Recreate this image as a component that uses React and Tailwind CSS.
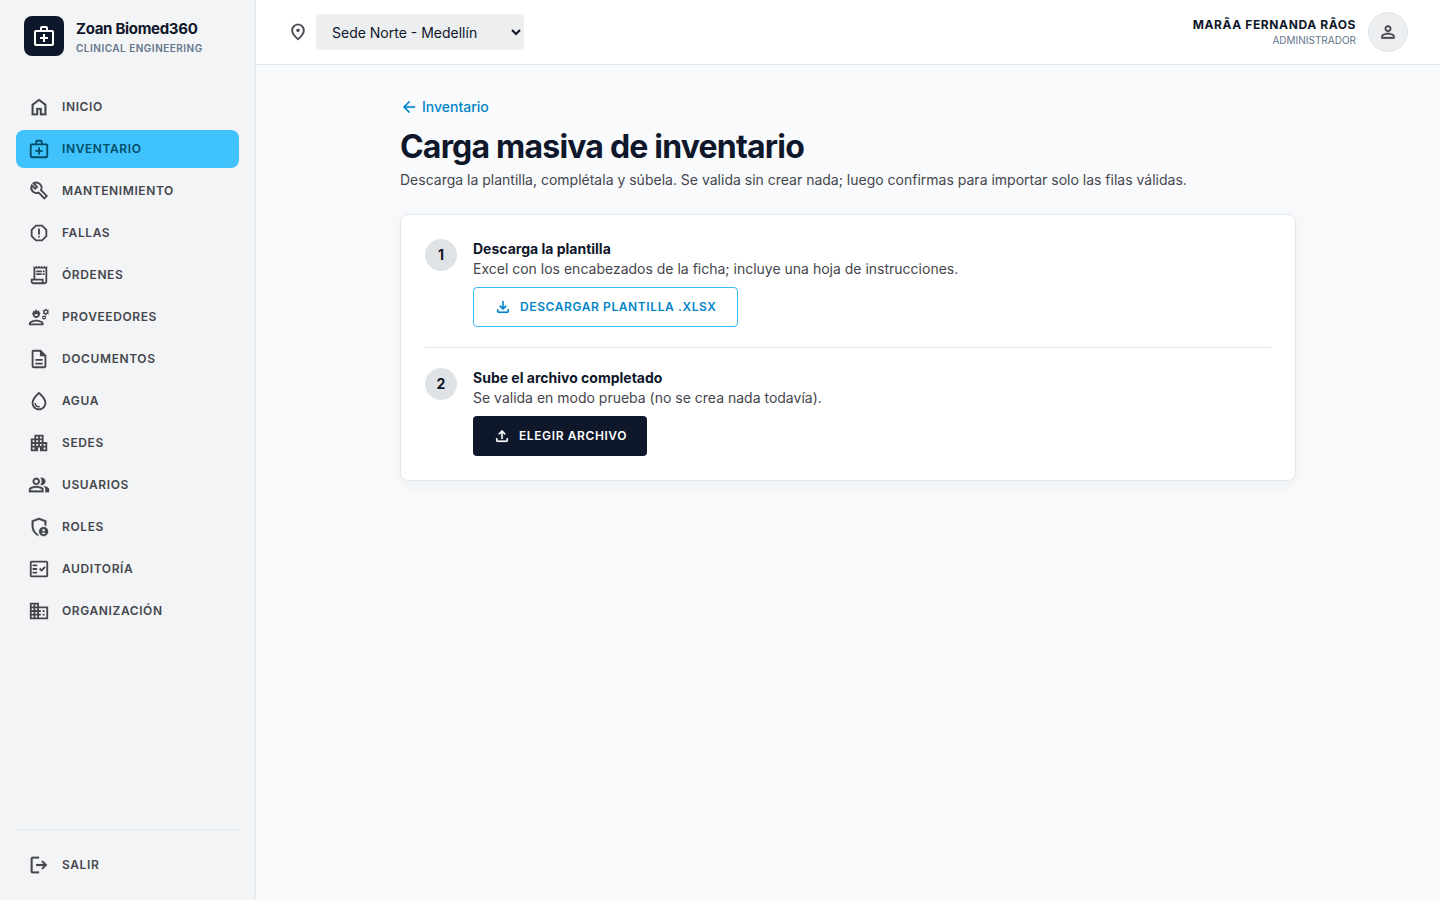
import React, { useState } from 'react';
import {
    MdOutlineMedicalServices,
    MdOutlineReport,
    MdOutlineReceiptLong,
    MdOutlineEngineering,
    MdOutlineDescription,
    MdOutlineWaterDrop,
    MdApartment,
    MdOutlineFactCheck,
    MdDomain,
} from 'react-icons/md';

const Icon = ({ d, size = 22 }) => (
    <svg
        width={size}
        height={size}
        viewBox="0 0 24 24"
        fill="currentColor"
        stroke="currentColor"
        strokeWidth="0.25"
        className="shrink-0"
        aria-hidden="true"
    >
        <path d={d} />
    </svg>
);

const WrenchIcon = () => (
    <svg width="22" height="22" viewBox="0 0 24 24" fill="none" stroke="currentColor" strokeWidth="2" className="shrink-0" aria-hidden="true">
        <path d="M4.2 5.8L7.8 9.4L9.8 7.4L6 3.7A5.8 5.8 0 0 1 14.2 11.2L20.4 17.4L17.8 20L11.6 13.8A5.8 5.8 0 0 1 4.2 5.8z" />
    </svg>
);

const paths = {
    home: 'M6 19h3v-6h6v6h3v-9l-6-4.5L6 10zm-2 2V9l8-6 8 6v12h-7v-6h-2v6z',
    roles: 'M12 22q-3.475-.875-5.738-3.988T4 11.1V5l8-3l8 3v5.7q-.475-.2-.975-.363T18 10.1V6.4l-6-2.25L6 6.4v4.7q0 1.175.313 2.35t.875 2.238T8.55 17.65t1.775 1.5q.275.8.725 1.525t1.025 1.3q-.025 0-.037.012T12 22m5 0q-2.075 0-3.537-1.463T12 17t1.463-3.537T17 12t3.538 1.463T22 17t-1.463 3.538T17 22m0-5q.625 0 1.063-.437T18.5 15.5t-.437-1.062T17 14t-1.062.438T15.5 15.5t.438 1.063T17 17m0 3q.775 0 1.425-.363t1.05-.962q-.55-.325-1.175-.5T17 18t-1.3.175t-1.175.5q.4.6 1.05.963T17 20',
    group: 'M1 20v-2.8q0-.85.438-1.562T2.6 14.55q1.55-.775 3.15-1.162T9 13t3.25.388t3.15 1.162q.725.375 1.163 1.088T17 17.2V20zm18 0v-3q0-1.1-.612-2.113T16.65 13.15q1.275.15 2.4.513t2.1.887q.9.5 1.375 1.112T23 17v3zM9 12q-1.65 0-2.825-1.175T5 8t1.175-2.825T9 4t2.825 1.175T13 8t-1.175 2.825T9 12m10-4q0 1.65-1.175 2.825T15 12q-.275 0-.7-.062t-.7-.138q.675-.8 1.038-1.775T15 8t-.362-2.025T13.6 4.2q.35-.125.7-.163T15 4q1.65 0 2.825 1.175T19 8M3 18h12v-.8q0-.275-.137-.5t-.363-.35q-1.35-.675-2.725-1.012T9 15t-2.775.338T3.5 16.35q-.225.125-.362.35T3 17.2zm6-8q.825 0 1.413-.587T11 8t-.587-1.412T9 6t-1.412.588T7 8t.588 1.413T9 10',
    logout: 'M5 21q-.825 0-1.412-.587T3 19V5q0-.825.588-1.412T5 3h7v2H5v14h7v2zm11-4l-1.375-1.45l2.55-2.55H9v-2h8.175l-2.55-2.55L16 7l5 5z',
    pin: 'M12 12q.825 0 1.413-.588T14 10t-.587-1.413T12 8t-1.413.588T10 10t.588 1.413T12 12m0 7.35q3.05-2.8 4.525-5.088T18 10.2q0-2.725-1.737-4.462T12 4T7.738 5.738T6 10.2q0 1.775 1.475 4.063T12 19.35M12 22q-4.025-3.425-6.012-6.362T4 10.2q0-3.75 2.413-5.975T12 2t5.588 2.225T20 10.2q0 2.5-1.987 5.438T12 22',
    person: 'M12 12q-1.65 0-2.825-1.175T8 8t1.175-2.825T12 4t2.825 1.175T16 8t-1.175 2.825T12 12m-8 8v-2.8q0-.85.438-1.562T5.6 14.55q1.55-.775 3.15-1.162T12 13t3.25.388t3.15 1.162q.725.375 1.163 1.088T20 17.2V20zm2-2h12v-.8q0-.275-.137-.5t-.363-.35q-1.35-.675-2.725-1.012T12 15t-2.775.338T6.5 16.35q-.225.125-.363.35T6 17.2zm6-8q.825 0 1.413-.587T14 8t-.587-1.412T12 6t-1.412.588T10 8t.588 1.413T12 10',
    back: 'm7.825 13l5.6 5.6L12 20l-8-8l8-8l1.425 1.4l-5.6 5.6H20v2z',
    download: 'm12 16l-5-5l1.4-1.45l2.6 2.6V4h2v8.15l2.6-2.6L17 11zm-6 4q-.825 0-1.412-.587T4 18v-3h2v3h12v-3h2v3q0 .825-.587 1.413T18 20z',
    upload: 'M11 16V7.85l-2.6 2.6L7 9l5-5l5 5l-1.4 1.45l-2.6-2.6V16zm-5 4q-.825 0-1.412-.587T4 18v-3h2v3h12v-3h2v3q0 .825-.587 1.413T18 20z',
};

const navItems = [
    { label: 'Inicio', icon: <Icon d={paths.home} /> },
    { label: 'Inventario', icon: <MdOutlineMedicalServices size={22} />, active: true },
    { label: 'Mantenimiento', icon: <WrenchIcon /> },
    { label: 'Fallas', icon: <MdOutlineReport size={22} /> },
    { label: 'Órdenes', icon: <MdOutlineReceiptLong size={22} /> },
    { label: 'Proveedores', icon: <MdOutlineEngineering size={22} /> },
    { label: 'Documentos', icon: <MdOutlineDescription size={22} /> },
    { label: 'Agua', icon: <MdOutlineWaterDrop size={22} /> },
    { label: 'Sedes', icon: <MdApartment size={22} /> },
    { label: 'Usuarios', icon: <Icon d={paths.group} /> },
    { label: 'Roles', icon: <Icon d={paths.roles} /> },
    { label: 'Auditoría', icon: <MdOutlineFactCheck size={22} /> },
    { label: 'Organización', icon: <MdDomain size={22} /> },
];

const Sidebar = () => (
    <aside className="w-64 shrink-0 flex flex-col bg-[#f2f4f6] border-r border-[#e2e8f0]">
        <div className="flex items-center gap-3 px-6 pt-4 pb-8">
            <div className="w-10 h-10 rounded-lg bg-[#0f172a] text-white flex items-center justify-center">
                <MdOutlineMedicalServices size={24} />
            </div>
            <div>
                <p className="text-[15px] leading-6 font-bold tracking-[-0.02em] text-[#0f172a]">Zoan Biomed360</p>
                <p className="text-[10px] leading-[14px] font-semibold uppercase tracking-wider text-[#64748b]">Clinical Engineering</p>
            </div>
        </div>

        <nav className="flex-1 px-4 flex flex-col gap-1">
            {navItems.map((item) => (
                <a
                    key={item.label}
                    href="#"
                    className={`flex items-center gap-3 px-3 py-2 rounded-lg text-xs font-semibold uppercase tracking-wider ${
                        item.active ? 'bg-[#40c2fd] text-[#004d6a]' : 'text-[#45464d] hover:bg-[#e6e8ea]'
                    }`}
                >
                    {item.icon}
                    {item.label}
                </a>
            ))}
        </nav>

        <div className="mx-4 py-4 border-t border-[#e2e8f0]">
            <button
                type="button"
                className="w-full flex items-center gap-3 px-3 py-2 rounded-lg text-xs font-semibold uppercase tracking-wider text-[#45464d] hover:bg-[#e6e8ea]"
            >
                <Icon d={paths.logout} />
                Salir
            </button>
        </div>
    </aside>
);

const Topbar = () => {
    const [sede, setSede] = useState('norte');

    return (
        <header className="h-[65px] shrink-0 flex items-center justify-between px-8 bg-white border-b border-[#e2e8f0]">
            <div className="flex items-center gap-2 text-[#45464d]">
                <Icon d={paths.pin} size={20} />
                <select
                    aria-label="Sede"
                    value={sede}
                    onChange={(e) => setSede(e.target.value)}
                    className="w-52 h-9 px-3 rounded bg-[#eceef0] text-sm text-[#0f172a]"
                >
                    <option value="norte">Sede Norte - Medellín</option>
                </select>
            </div>

            <div className="flex items-center gap-3">
                <div className="text-right">
                    <p className="text-xs leading-4 font-bold uppercase tracking-wider text-[#0f172a]">MarÃ­a Fernanda RÃ­os</p>
                    <p className="text-[10px] leading-[14px] uppercase text-[#64748b]">Administrador</p>
                </div>
                <div className="w-10 h-10 rounded-full bg-[#eceef0] border border-[#e2e8f0] text-[#45464d] flex items-center justify-center">
                    <Icon d={paths.person} size={20} />
                </div>
            </div>
        </header>
    );
};

const Step = ({ number, title, text, children }) => (
    <div className="flex items-start gap-4 py-5 first:pt-0 last:pb-0">
        <div className="w-8 h-8 shrink-0 rounded-full bg-[#e0e3e5] text-sm font-bold text-[#0f172a] flex items-center justify-center">
            {number}
        </div>
        <div>
            <h2 className="text-sm font-bold text-[#0f172a]">{title}</h2>
            <p className="mb-2 text-sm text-[#45464d]">{text}</p>
            {children}
        </div>
    </div>
);

const App = () => {
    return (
        <div className="min-h-screen flex bg-[#f8fafc] font-['Inter',sans-serif]">
            <Sidebar />

            <div className="flex-1 min-w-0 flex flex-col">
                <Topbar />

                <main className="flex-1 p-8">
                    <div className="max-w-4xl mx-auto">
                        <a href="#" className="inline-flex items-center gap-1 text-sm font-medium text-[#0284c7] hover:underline">
                            <Icon d={paths.back} size={18} />
                            Inventario
                        </a>
                        <h1 className="mt-1 text-[32px] leading-[42px] font-bold tracking-tight text-[#0f172a]">Carga masiva de inventario</h1>
                        <p className="mt-0.5 text-sm text-[#45464d]">
                            Descarga la plantilla, complétala y súbela. Se valida sin crear nada; luego confirmas para importar solo las filas válidas.
                        </p>

                        <section className="mt-6 p-6 bg-white border border-[#e2e8f0] rounded-lg shadow-[0_4px_20px_rgba(15,23,42,0.05)] divide-y divide-[#e2e8f0]">
                            <Step
                                number={1}
                                title="Descarga la plantilla"
                                text="Excel con los encabezados de la ficha; incluye una hoja de instrucciones."
                            >
                                <button
                                    type="button"
                                    className="h-10 px-5 inline-flex items-center gap-2 rounded border border-[#38bdf8] text-xs font-semibold uppercase tracking-wider text-[#0284c7] hover:bg-sky-50"
                                >
                                    <Icon d={paths.download} size={18} />
                                    Descargar plantilla .xlsx
                                </button>
                            </Step>
                            <Step number={2} title="Sube el archivo completado" text="Se valida en modo prueba (no se crea nada todavía).">
                                <button
                                    type="button"
                                    className="h-10 px-5 inline-flex items-center gap-2 rounded bg-[#0f172a] text-xs font-semibold uppercase tracking-wider text-white hover:bg-slate-800"
                                >
                                    <Icon d={paths.upload} size={18} />
                                    Elegir archivo
                                </button>
                            </Step>
                        </section>
                    </div>
                </main>
            </div>
        </div>
    );
};

export default App;
